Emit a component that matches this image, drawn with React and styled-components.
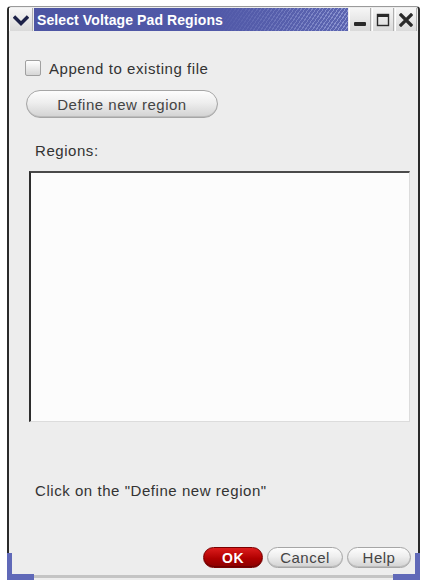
import React from "react";
import styled, { createGlobalStyle } from "styled-components";

const Global = createGlobalStyle`
  html, body { margin: 0; padding: 0; background: #ffffff; }
  body { font-family: "Liberation Sans", Arial, sans-serif; }
`;

const Page = styled.div`
  width: 425px;
  height: 583px;
  padding: 6px 0 0 7px;
  box-sizing: border-box;
`;

const Window = styled.div`
  position: relative;
  width: 413px;
  height: 574px;
  box-sizing: border-box;
  border-left: 2px solid #2a2a2a;
  border-right: 2px solid #2a2a2a;
  border-top: 1px solid #9a9a9a;
  border-radius: 4px 4px 0 0;
  background: #ededed;
  display: flex;
  flex-direction: column;
`;

const TitleBar = styled.div`
  display: flex;
  height: 23px;
  margin-top: 1px;
  gap: 1px;
  padding-right: 1px;
`;

const FrameButton = styled.div`
  width: ${(p) => p.$w || 22}px;
  flex: none;
  display: flex;
  align-items: center;
  justify-content: center;
  background: linear-gradient(#f6f6f6, #dadada);
  border-right: 1px solid #b0b0b0;
  border-left: 1px solid #ffffff;
  box-sizing: border-box;
`;

const Title = styled.div`
  flex: 1;
  display: flex;
  align-items: center;
  padding-left: 3px;
  color: #ffffff;
  font-weight: bold;
  font-size: 14px;
  letter-spacing: 0.1px;
  background:
    linear-gradient(to right, #4d55a3 0%, #5159a8 58%, rgba(82, 90, 170, 0) 100%),
    repeating-linear-gradient(125deg, #8e97d2 0 1px, #5c65b0 1px 3px);
`;

const Body = styled.div`
  flex: 1;
  display: flex;
  flex-direction: column;
  padding: 0 0 0 16px;
  color: #333333;
  font-size: 15px;
  letter-spacing: 0.55px;
`;

const CheckRow = styled.label`
  display: flex;
  align-items: center;
  gap: 8px;
  margin-top: 29px;
  height: 16px;
`;

const CheckBox = styled.span`
  width: 14px;
  height: 14px;
  border: 1px solid #a0a0a0;
  border-radius: 2px;
  background: linear-gradient(#ffffff, #d6d6d6);
`;

const PillButton = styled.button`
  font-family: "Liberation Sans", Arial, sans-serif;
  font-size: ${(p) => p.$size || 15}px;
  font-weight: ${(p) => (p.$primary ? "bold" : "normal")};
  letter-spacing: 0.5px;
  color: ${(p) => (p.$primary ? "#ffffff" : "#444444")};
  width: ${(p) => p.$w}px;
  height: ${(p) => p.$h}px;
  padding: 0;
  border-radius: ${(p) => p.$h / 2}px;
  border: 1px solid ${(p) => (p.$primary ? "#7a0000" : "#a6a6a6")};
  background: ${(p) =>
    p.$primary
      ? "linear-gradient(#dc1c1c, #b00000 55%, #8a0000)"
      : "linear-gradient(#fdfdfd, #eeeeee 45%, #d2d2d2)"};
  box-shadow: inset 0 -1px 0 ${(p) => (p.$primary ? "#6d0000" : "#bcbcbc")};
`;

const DefineButton = styled(PillButton)`
  margin-top: 14px;
  margin-left: 1px;
`;

const Label = styled.div`
  margin-left: 10px;
  margin-top: ${(p) => p.$mt}px;
  height: 17px;
  line-height: 17px;
`;

const ListBox = styled.div`
  margin-top: 12px;
  margin-left: 4px;
  width: 381px;
  height: 251px;
  box-sizing: border-box;
  background: #fcfcfc;
  border-top: 2px solid #4a4a4a;
  border-left: 2px solid #2e2e2e;
  border-right: 1px solid #dcdcdc;
  border-bottom: 1px solid #dcdcdc;
`;

const ButtonRow = styled.div`
  display: flex;
  gap: 4px;
  margin-top: 48px;
  margin-left: 178px;
`;

const BottomEdge = styled.div`
  height: 3px;
  margin-bottom: 2px;
  background: #c4c4c4;
`;

const CornerV = styled.div`
  position: absolute;
  bottom: 0;
  ${(p) => (p.$right ? "right: -2px;" : "left: -2px;")}
  width: 5px;
  height: 27px;
  background: #6069b8;
`;

const CornerH = styled.div`
  position: absolute;
  bottom: 0;
  ${(p) => (p.$right ? "right: -2px;" : "left: -2px;")}
  width: 27px;
  height: 6px;
  background: #6069b8;
`;

const Chevron = () => (
  <svg width="16" height="12" viewBox="0 0 16 12">
    <path d="M1 2.5 L8 9.5 L15 2.5" fill="none" stroke="#1c2148" strokeWidth="3.4" />
  </svg>
);

const MinIcon = () => (
  <svg width="14" height="14" viewBox="0 0 14 14">
    <rect x="1" y="9" width="12" height="4" rx="1" fill="#2a2a2a" />
  </svg>
);

const MaxIcon = () => (
  <svg width="14" height="14" viewBox="0 0 14 14">
    <rect x="1.5" y="1.5" width="11" height="11" fill="none" stroke="#2a2a2a" strokeWidth="1.4" />
    <rect x="1" y="1" width="12" height="3" fill="#2a2a2a" />
  </svg>
);

const CloseIcon = () => (
  <svg width="14" height="14" viewBox="0 0 14 14">
    <path d="M2 2 L12 12 M12 2 L2 12" stroke="#2a2a2a" strokeWidth="3.2" strokeLinecap="square" />
  </svg>
);

export default function App() {
  return (
    <>
      <Global />
      <Page>
        <Window>
          <TitleBar>
            <FrameButton $w={24}>
              <Chevron />
            </FrameButton>
            <Title>Select Voltage Pad Regions</Title>
            <FrameButton>
              <MinIcon />
            </FrameButton>
            <FrameButton>
              <MaxIcon />
            </FrameButton>
            <FrameButton>
              <CloseIcon />
            </FrameButton>
          </TitleBar>
          <Body>
            <CheckRow>
              <CheckBox />
              <span>Append to existing file</span>
            </CheckRow>
            <DefineButton $w={192} $h={28}>
              Define new region
            </DefineButton>
            <Label $mt={24}>Regions:</Label>
            <ListBox />
            <Label $mt={60}>Click on the "Define new region"</Label>
            <ButtonRow>
              <PillButton $primary $w={60} $h={21} $size={14}>
                OK
              </PillButton>
              <PillButton $w={76} $h={21}>
                Cancel
              </PillButton>
              <PillButton $w={64} $h={21}>
                Help
              </PillButton>
            </ButtonRow>
          </Body>
          <BottomEdge />
          <CornerV />
          <CornerH />
          <CornerV $right />
          <CornerH $right />
        </Window>
      </Page>
    </>
  );
}
